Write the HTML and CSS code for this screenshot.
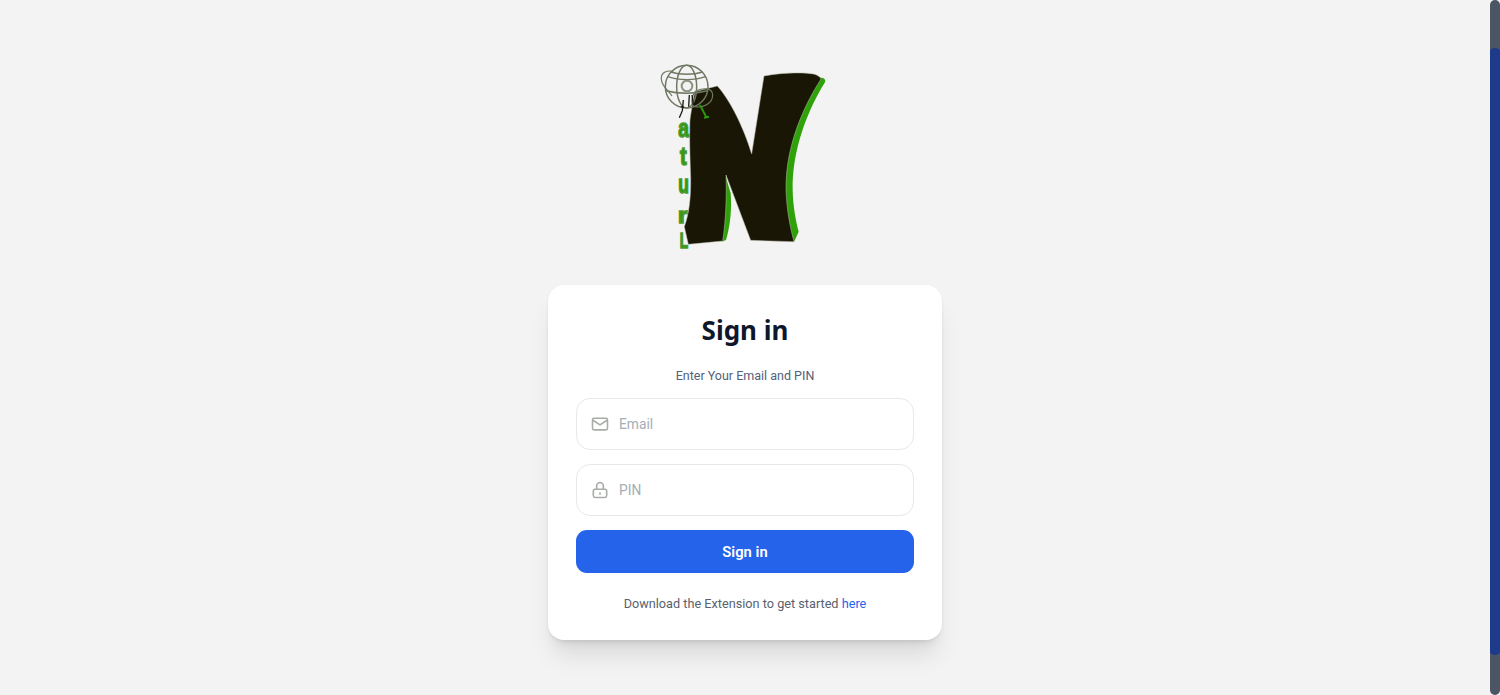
FILE: index.html
```html
<!DOCTYPE html>
<html lang="en">
<head>
<meta charset="utf-8">
<title>Sign in</title>
<link rel="stylesheet" href="styles.css">
</head>
<body>
<div class="app">
  <main class="page">
    <svg class="logo" viewBox="0 0 600 630" aria-label="Naturl logo">
      <g class="logo-letters">
        <text x="115" y="262" class="lt" textLength="32" lengthAdjust="spacingAndGlyphs">a</text>
        <text x="120" y="345" class="lt" textLength="20" lengthAdjust="spacingAndGlyphs">t</text>
        <text x="115" y="430" class="lt" textLength="32" lengthAdjust="spacingAndGlyphs">u</text>
        <text x="114" y="520" class="lt lt-small" textLength="28" lengthAdjust="spacingAndGlyphs">r</text>
        <text x="119" y="594" class="lt lt-small" textLength="25" lengthAdjust="spacingAndGlyphs">L</text>
      </g>
      <path class="logo-green" d="M535 82 L549 84 Q558 88 555 97 C503 180 456 300 458 420 C459 470 468 515 476 545 L462 576 L430 500 L435 300 Z"/>
      <path class="logo-green" d="M255 372 L272 430 C276 480 270 530 258 570 L246 575 L235 450 Z"/>
      <path class="logo-n" d="M232 108 C270 150 310 230 335 312 L372 78 C420 68 490 66 520 72 C532 75 540 80 543 87 C490 170 436 290 438 420 C440 480 450 530 462 575 L332 571 L258 375 C260 430 258 510 248 573 L145 583 L133 530 C148 490 153 440 152 380 C150 320 148 260 150 210 C155 175 160 145 165 125 Z"/>
      <g class="logo-globe">
        <path class="g-lobe" d="M100 64 C80 60 62 68 64 88 C66 110 84 120 96 138"/>
        <circle cx="140" cy="110" r="64"/>
        <ellipse cx="140" cy="110" rx="30" ry="64"/>
        <path d="M84 80 C115 92 165 92 196 80 M78 122 C115 132 165 132 202 122 M92 66 C120 75 160 75 188 66"/>
        <circle class="g-ring" cx="141" cy="108" r="16"/>
        <path class="g-lobe" d="M165 125 C185 112 218 112 218 135 C218 160 190 175 165 170 C150 165 155 140 165 125"/>
      </g>
      <path class="logo-stick" d="M180 165 L198 200 M192 203 L207 200"/>
      <path class="logo-man" d="M130 150 L127 182 L118 203 M148 135 L146 170 M156 135 L160 165 M122 170 L132 172"/>
    </svg>
    <section class="card">
      <h1 class="title">Sign in</h1>
      <p class="subtitle">Enter Your Email and PIN</p>
      <form class="form">
        <label class="field">
          <svg class="icon" viewBox="0 0 24 24"><rect x="3" y="5" width="18" height="14" rx="2"/><path d="M3.5 7.5 12 13l8.5-5.5"/></svg>
          <input class="input" type="email" placeholder="Email">
        </label>
        <label class="field">
          <svg class="icon" viewBox="0 0 24 24"><rect x="4" y="11" width="16" height="10" rx="2"/><path d="M8 11V7a4 4 0 0 1 8 0v4M12 15.5v1.5"/></svg>
          <input class="input" type="password" placeholder="PIN">
        </label>
        <button class="submit" type="button">Sign in</button>
      </form>
      <p class="foot">Download the Extension to get started <a class="link" href="#">here</a></p>
    </section>
  </main>
  <div class="rail" aria-hidden="true">
    <div class="rail-fill"></div>
  </div>
</div>
</body>
</html>
```
FILE: styles.css
```css
* { box-sizing: border-box; }
html, body { margin: 0; height: 100%; overflow: hidden; }
body { background: #f3f3f3; font-family: Roboto, "Noto Sans", sans-serif; }
.app { display: flex; height: 695px; }
.page { flex: 1; display: flex; flex-direction: column; align-items: center; padding-top: 50px; }
.logo { display: block; width: 200px; height: 210px; margin: 0 10px 25px 0; }
.logo-n { fill: #1a1605; stroke: #b9b9a8; stroke-width: 1.5; }
.logo-green { fill: #2fa20a; }
.lt { font-family: "Liberation Sans", sans-serif; font-weight: 700; font-size: 80px; fill: #2c980c; stroke: #4a9a32; stroke-width: 5; }
.lt-small { font-size: 68px; }
.logo-globe { fill: none; stroke: #6f7862; stroke-width: 4.5; }
.g-ring { stroke: #8a9480; stroke-width: 6; fill: #f3f3f3; }
.g-lobe { stroke: #6c7a5e; stroke-width: 3.5; }
.logo-stick { fill: none; stroke: #2c980c; stroke-width: 6; }
.logo-man { fill: none; stroke: #1a1a10; stroke-width: 4; }

.card { width: 394px; height: 355px; padding: 28px; background: #fff; border-radius: 16px; box-shadow: 0 20px 25px -5px rgba(0,0,0,.1), 0 8px 10px -6px rgba(0,0,0,.1), 0 1px 3px rgba(0,0,0,.06); }
.title { margin: 0; font-family: "Noto Sans", sans-serif; font-size: 26px; line-height: 34px; font-weight: 700; color: #0f172a; text-align: center; }
.subtitle { margin: 19px 0 0; font-size: 12.5px; line-height: 20px; color: #526179; text-align: center; }
.form { display: flex; flex-direction: column; gap: 14px; margin-top: 12px; }
.field { display: flex; align-items: center; gap: 9px; height: 52px; padding: 0 13px; border: 1px solid #e8e8e8; border-radius: 14px; background: #fff; }
.icon { width: 20px; height: 20px; flex: none; fill: none; stroke: #a8aca6; stroke-width: 1.9; stroke-linecap: round; stroke-linejoin: round; }
.input { flex: 1; min-width: 0; border: 0; outline: 0; padding: 0; background: transparent; font: inherit; font-size: 13.8px; color: #111827; }
.input::placeholder { color: #a4adb8; opacity: 1; }
.submit { height: 43px; border: 0; border-radius: 11px; background: #2563eb; color: #fff; font: inherit; font-size: 14.8px; font-weight: 600; }
.foot { margin: 21px 0 0; font-size: 12.7px; line-height: 20px; color: #58616e; text-align: center; }
.link { color: #2563eb; text-decoration: none; }

.rail { width: 10px; flex: none; display: flex; flex-direction: column; padding: 48px 0 40px; background: #4b5563; border-radius: 5px; }
.rail-fill { flex: 1; background: #1e3a8a; border-radius: 5px / 3px; }
```
